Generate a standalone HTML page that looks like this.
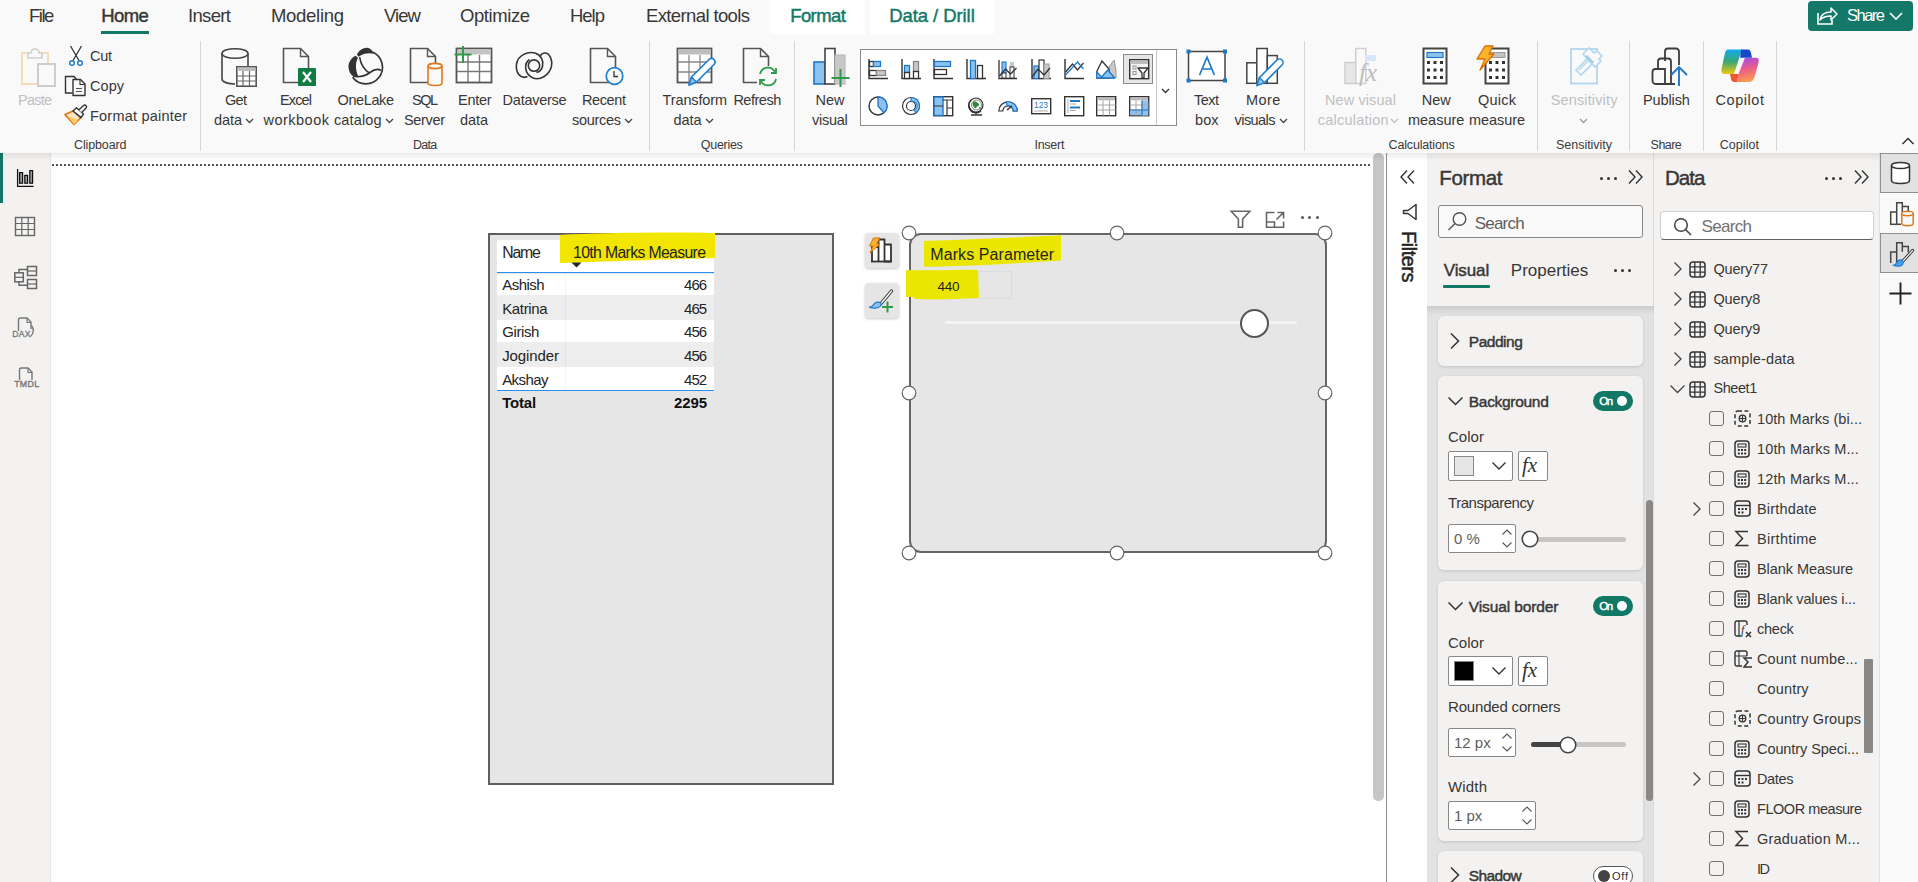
<!DOCTYPE html><html><head><meta charset="utf-8"><style>
html,body{margin:0;padding:0;}
body{width:1918px;height:882px;position:relative;overflow:hidden;background:#fff;font-family:"Liberation Sans",sans-serif;}
body>div,body>svg{position:absolute;}
.t{white-space:nowrap;}
svg{overflow:visible;}
</style></head><body>
<div style="left:0px;top:0px;width:1918px;height:153px;background:#f9f9f9"></div>
<div style="left:770px;top:0px;width:95px;height:34px;background:#ffffff"></div>
<div style="left:870px;top:0px;width:124px;height:34px;background:#ffffff"></div>
<div style="left:0px;top:153px;width:50px;height:729px;background:#f3f2f1"></div>
<div style="left:50px;top:153px;width:1px;height:729px;background:#e6e6e6"></div>
<div style="left:0px;top:153px;width:3px;height:50px;background:#117865"></div>
<div style="left:51px;top:153px;width:1335px;height:729px;background:#ffffff"></div>
<div style="left:52px;top:164px;width:1318px;height:0;border-top:2px dotted #555"></div>
<div style="left:1373px;top:153px;width:11px;height:648px;background:#c6c6c6;border-radius:5px"></div>
<div style="left:1386px;top:153px;width:1px;height:729px;background:#8c8c8c"></div>
<div style="left:1387px;top:153px;width:41px;height:729px;background:#ffffff"></div>
<div style="left:1387px;top:153px;width:41px;height:729px;background:#ffffff"></div>
<div style="left:1427px;top:153px;width:227px;height:729px;background:#f3f2f1"></div>
<div style="left:1427px;top:306px;width:227px;height:576px;background:#e2e2e2"></div>
<div style="left:1653px;top:153px;width:1px;height:729px;background:#dcdcdc"></div>
<div style="left:1654px;top:153px;width:225px;height:729px;background:#f3f2f1"></div>
<div style="left:1879px;top:153px;width:39px;height:729px;background:#f9f9f9"></div>
<div style="left:1879px;top:153px;width:1px;height:729px;background:#e1e1e1"></div>
<div style="left:0px;top:153px;width:1918px;height:8px;background:linear-gradient(rgba(0,0,0,0.075),rgba(0,0,0,0))"></div>
<div class="t" style="left:29.00px;top:7.34px;font-size:18.5px;line-height:18.5px;letter-spacing:-1.500px;color:#383736;font-weight:normal;">File</div>
<div class="t" style="left:101.22px;top:7.34px;font-size:18.5px;line-height:18.5px;letter-spacing:-0.599px;color:#383736;font-weight:normal;-webkit-text-stroke:0.45px #383736;">Home</div>
<div style="left:101px;top:31px;width:48px;height:3px;background:#117865"></div>
<div class="t" style="left:188.00px;top:7.34px;font-size:18.5px;line-height:18.5px;letter-spacing:-0.654px;color:#383736;font-weight:normal;">Insert</div>
<div class="t" style="left:271.00px;top:7.34px;font-size:18.5px;line-height:18.5px;letter-spacing:-0.296px;color:#383736;font-weight:normal;">Modeling</div>
<div class="t" style="left:384.00px;top:7.34px;font-size:18.5px;line-height:18.5px;letter-spacing:-0.937px;color:#383736;font-weight:normal;">View</div>
<div class="t" style="left:460.00px;top:7.34px;font-size:18.5px;line-height:18.5px;letter-spacing:-0.426px;color:#383736;font-weight:normal;">Optimize</div>
<div class="t" style="left:570.00px;top:7.34px;font-size:18.5px;line-height:18.5px;letter-spacing:-1.018px;color:#383736;font-weight:normal;">Help</div>
<div class="t" style="left:646.00px;top:7.34px;font-size:18.5px;line-height:18.5px;letter-spacing:-0.622px;color:#383736;font-weight:normal;">External tools</div>
<div class="t" style="left:790.22px;top:7.34px;font-size:18.5px;line-height:18.5px;letter-spacing:-0.606px;color:#117865;font-weight:normal;-webkit-text-stroke:0.45px #117865;">Format</div>
<div class="t" style="left:889.22px;top:7.34px;font-size:18.5px;line-height:18.5px;letter-spacing:-0.073px;color:#117865;font-weight:normal;-webkit-text-stroke:0.45px #117865;">Data / Drill</div>
<div style="left:1808px;top:1px;width:105px;height:30px;background:#137868;border-radius:4px"></div>
<div class="t" style="left:1847.00px;top:7.33px;font-size:16.5px;line-height:16.5px;letter-spacing:-1.500px;color:#ffffff;font-weight:normal;">Share</div>
<svg style="left:1816px;top:4px;" width="22" height="22" viewBox="0 0 22 22"><path d="M2 9v11h14v-4" fill="none" stroke="#fff" stroke-width="1.6"/><path d="M4 16c1-6 6-8 11-8V4l6 6-6 6v-4c-4 0-8 1-11 4z" fill="none" stroke="#fff" stroke-width="1.5" stroke-linejoin="round"/></svg>
<svg style="left:1888px;top:10px;" width="16" height="12" viewBox="0 0 16 12"><path d="M2 3l6 6 6-6" fill="none" stroke="#fff" stroke-width="1.6"/></svg>
<div class="t" style="left:18.00px;top:93.02px;font-size:14.5px;line-height:14.5px;letter-spacing:-0.769px;color:#c0c0c0;font-weight:normal;">Paste</div>
<div class="t" style="left:90.00px;top:49.22px;font-size:14.5px;line-height:14.5px;letter-spacing:-0.281px;color:#383736;font-weight:normal;">Cut</div>
<div class="t" style="left:90.00px;top:79.22px;font-size:14.5px;line-height:14.5px;letter-spacing:0.052px;color:#383736;font-weight:normal;">Copy</div>
<div class="t" style="left:90.00px;top:109.22px;font-size:14.5px;line-height:14.5px;letter-spacing:0.209px;color:#383736;font-weight:normal;">Format painter</div>
<div class="t" style="left:74.00px;top:138.92px;font-size:12.5px;line-height:12.5px;letter-spacing:-0.125px;color:#3b3a39;font-weight:normal;">Clipboard</div>
<div style="left:200px;top:41px;width:1px;height:110px;background:#d6d6d6"></div>
<div class="t" style="left:225.00px;top:93.02px;font-size:14.5px;line-height:14.5px;letter-spacing:-0.687px;color:#383736;font-weight:normal;">Get</div>
<div class="t" style="left:214.00px;top:112.82px;font-size:14.5px;line-height:14.5px;letter-spacing:-0.077px;color:#383736;font-weight:normal;">data</div>
<svg style="left:245px;top:118px;" width="9" height="6" viewBox="0 0 9 6"><path d="M1 1l3.5 3.5L8 1" fill="none" stroke="#444" stroke-width="1.3"/></svg>
<div class="t" style="left:280.00px;top:93.02px;font-size:14.5px;line-height:14.5px;letter-spacing:-0.863px;color:#383736;font-weight:normal;">Excel</div>
<div class="t" style="left:263.53px;top:112.82px;font-size:14.5px;line-height:14.5px;letter-spacing:0.483px;color:#383736;font-weight:normal;">workbook</div>
<div class="t" style="left:337.50px;top:93.02px;font-size:14.5px;line-height:14.5px;letter-spacing:-0.393px;color:#383736;font-weight:normal;">OneLake</div>
<div class="t" style="left:334.00px;top:112.82px;font-size:14.5px;line-height:14.5px;letter-spacing:0.123px;color:#383736;font-weight:normal;">catalog</div>
<svg style="left:385px;top:118px;" width="9" height="6" viewBox="0 0 9 6"><path d="M1 1l3.5 3.5L8 1" fill="none" stroke="#444" stroke-width="1.3"/></svg>
<div class="t" style="left:412.00px;top:93.02px;font-size:14.5px;line-height:14.5px;letter-spacing:-1.500px;color:#383736;font-weight:normal;">SQL</div>
<div class="t" style="left:404.00px;top:112.82px;font-size:14.5px;line-height:14.5px;letter-spacing:-0.341px;color:#383736;font-weight:normal;">Server</div>
<div class="t" style="left:458.00px;top:93.02px;font-size:14.5px;line-height:14.5px;letter-spacing:-0.289px;color:#383736;font-weight:normal;">Enter</div>
<div class="t" style="left:460.00px;top:112.82px;font-size:14.5px;line-height:14.5px;letter-spacing:-0.077px;color:#383736;font-weight:normal;">data</div>
<div class="t" style="left:502.60px;top:93.02px;font-size:14.5px;line-height:14.5px;letter-spacing:-0.249px;color:#383736;font-weight:normal;">Dataverse</div>
<div class="t" style="left:582.00px;top:93.02px;font-size:14.5px;line-height:14.5px;letter-spacing:-0.387px;color:#383736;font-weight:normal;">Recent</div>
<div class="t" style="left:572.00px;top:112.82px;font-size:14.5px;line-height:14.5px;letter-spacing:-0.294px;color:#383736;font-weight:normal;">sources</div>
<svg style="left:624px;top:118px;" width="9" height="6" viewBox="0 0 9 6"><path d="M1 1l3.5 3.5L8 1" fill="none" stroke="#444" stroke-width="1.3"/></svg>
<div class="t" style="left:413.00px;top:138.92px;font-size:12.5px;line-height:12.5px;letter-spacing:-0.704px;color:#3b3a39;font-weight:normal;">Data</div>
<div style="left:649px;top:41px;width:1px;height:110px;background:#d6d6d6"></div>
<div class="t" style="left:662.60px;top:93.02px;font-size:14.5px;line-height:14.5px;letter-spacing:-0.141px;color:#383736;font-weight:normal;">Transform</div>
<div class="t" style="left:673.40px;top:112.82px;font-size:14.5px;line-height:14.5px;letter-spacing:0.023px;color:#383736;font-weight:normal;">data</div>
<svg style="left:705px;top:118px;" width="9" height="6" viewBox="0 0 9 6"><path d="M1 1l3.5 3.5L8 1" fill="none" stroke="#444" stroke-width="1.3"/></svg>
<div class="t" style="left:733.40px;top:93.02px;font-size:14.5px;line-height:14.5px;letter-spacing:-0.494px;color:#383736;font-weight:normal;">Refresh</div>
<div class="t" style="left:700.80px;top:138.92px;font-size:12.5px;line-height:12.5px;letter-spacing:-0.294px;color:#3b3a39;font-weight:normal;">Queries</div>
<div style="left:794px;top:41px;width:1px;height:110px;background:#d6d6d6"></div>
<div class="t" style="left:815.50px;top:93.02px;font-size:14.5px;line-height:14.5px;letter-spacing:-0.022px;color:#383736;font-weight:normal;">New</div>
<div class="t" style="left:812.00px;top:112.82px;font-size:14.5px;line-height:14.5px;letter-spacing:-0.275px;color:#383736;font-weight:normal;">visual</div>
<div style="left:860px;top:49px;width:317px;height:77px;background:#ffffff;border:1px solid #8a8a8a;box-sizing:border-box"></div>
<div style="left:1156px;top:50px;width:1px;height:75px;background:#c8c8c8"></div>
<svg style="left:1161px;top:88px;" width="9" height="6" viewBox="0 0 9 6"><path d="M1 1l3.5 3.5L8 1" fill="none" stroke="#333" stroke-width="1.3"/></svg>
<div style="left:1123px;top:54px;width:30px;height:30px;background:#e6e6e6;border:1px solid #8a8a8a;box-sizing:border-box"></div>
<div class="t" style="left:1194.00px;top:93.02px;font-size:14.5px;line-height:14.5px;letter-spacing:-0.531px;color:#383736;font-weight:normal;">Text</div>
<div class="t" style="left:1195.00px;top:112.82px;font-size:14.5px;line-height:14.5px;letter-spacing:0.113px;color:#383736;font-weight:normal;">box</div>
<div class="t" style="left:1246.00px;top:93.02px;font-size:14.5px;line-height:14.5px;letter-spacing:0.456px;color:#383736;font-weight:normal;">More</div>
<div class="t" style="left:1234.60px;top:112.82px;font-size:14.5px;line-height:14.5px;letter-spacing:-0.588px;color:#383736;font-weight:normal;">visuals</div>
<svg style="left:1279px;top:118px;" width="9" height="6" viewBox="0 0 9 6"><path d="M1 1l3.5 3.5L8 1" fill="none" stroke="#444" stroke-width="1.3"/></svg>
<div class="t" style="left:1034.40px;top:138.92px;font-size:12.5px;line-height:12.5px;letter-spacing:-0.233px;color:#3b3a39;font-weight:normal;">Insert</div>
<div style="left:1304px;top:41px;width:1px;height:110px;background:#d6d6d6"></div>
<div class="t" style="left:1325.00px;top:93.02px;font-size:14.5px;line-height:14.5px;letter-spacing:0.099px;color:#c0c0c0;font-weight:normal;">New visual</div>
<div class="t" style="left:1317.70px;top:112.82px;font-size:14.5px;line-height:14.5px;letter-spacing:0.239px;color:#c0c0c0;font-weight:normal;">calculation</div>
<svg style="left:1390px;top:118px;" width="9" height="6" viewBox="0 0 9 6"><path d="M1 1l3.5 3.5L8 1" fill="none" stroke="#c0c0c0" stroke-width="1.3"/></svg>
<div class="t" style="left:1421.80px;top:93.02px;font-size:14.5px;line-height:14.5px;letter-spacing:-0.022px;color:#383736;font-weight:normal;">New</div>
<div class="t" style="left:1408.00px;top:112.82px;font-size:14.5px;line-height:14.5px;letter-spacing:-0.020px;color:#383736;font-weight:normal;">measure</div>
<div class="t" style="left:1478.00px;top:93.02px;font-size:14.5px;line-height:14.5px;letter-spacing:0.227px;color:#383736;font-weight:normal;">Quick</div>
<div class="t" style="left:1469.00px;top:112.82px;font-size:14.5px;line-height:14.5px;letter-spacing:-0.070px;color:#383736;font-weight:normal;">measure</div>
<div class="t" style="left:1388.60px;top:138.92px;font-size:12.5px;line-height:12.5px;letter-spacing:-0.181px;color:#3b3a39;font-weight:normal;">Calculations</div>
<div style="left:1537px;top:41px;width:1px;height:110px;background:#d6d6d6"></div>
<div class="t" style="left:1550.70px;top:93.02px;font-size:14.5px;line-height:14.5px;letter-spacing:0.144px;color:#c0c0c0;font-weight:normal;">Sensitivity</div>
<svg style="left:1579px;top:118px;" width="9" height="6" viewBox="0 0 9 6"><path d="M1 1l3.5 3.5L8 1" fill="none" stroke="#999" stroke-width="1.3"/></svg>
<div class="t" style="left:1556.00px;top:138.92px;font-size:12.5px;line-height:12.5px;letter-spacing:-0.026px;color:#3b3a39;font-weight:normal;">Sensitivity</div>
<div style="left:1629px;top:41px;width:1px;height:110px;background:#d6d6d6"></div>
<div class="t" style="left:1643.00px;top:93.02px;font-size:14.5px;line-height:14.5px;letter-spacing:-0.110px;color:#383736;font-weight:normal;">Publish</div>
<div class="t" style="left:1650.60px;top:138.92px;font-size:12.5px;line-height:12.5px;letter-spacing:-0.537px;color:#3b3a39;font-weight:normal;">Share</div>
<div style="left:1703px;top:41px;width:1px;height:110px;background:#d6d6d6"></div>
<div class="t" style="left:1715.60px;top:93.02px;font-size:14.5px;line-height:14.5px;letter-spacing:0.544px;color:#383736;font-weight:normal;">Copilot</div>
<div class="t" style="left:1719.80px;top:138.92px;font-size:12.5px;line-height:12.5px;letter-spacing:0.048px;color:#3b3a39;font-weight:normal;">Copilot</div>
<div style="left:1776px;top:41px;width:1px;height:110px;background:#d6d6d6"></div>
<svg style="left:1901px;top:136px;" width="14" height="10" viewBox="0 0 14 10"><path d="M1.5 8l5.5-5.5L12.5 8" fill="none" stroke="#333" stroke-width="1.5"/></svg>
<svg style="left:20px;top:47px;" width="37" height="41" viewBox="0 0 37 41"><rect x="2" y="6" width="26" height="31" fill="none" stroke="#f4dcb8" stroke-width="2"/>
<path d="M8 11V6h3a4 4 0 0 1 8 0h3v5z" fill="#f9f9f9" stroke="#cfcfcf" stroke-width="1.6"/>
<rect x="18" y="17" width="17" height="22" fill="#f9f9f9" stroke="#cdcdcd" stroke-width="2"/></svg>
<svg style="left:68px;top:45px;" width="16" height="22" viewBox="0 0 16 22"><path d="M2.5 1L11 15.5M13.5 1L5 15.5" stroke="#333" stroke-width="1.3" fill="none"/>
<circle cx="4" cy="18" r="2.3" fill="none" stroke="#1f77c9" stroke-width="1.4"/><circle cx="12" cy="18" r="2.3" fill="none" stroke="#1f77c9" stroke-width="1.4"/></svg>
<svg style="left:64px;top:75px;" width="22" height="22" viewBox="0 0 22 22"><path d="M8.5 18H1.5V1.5h8.5l2.5 3" fill="none" stroke="#333" stroke-width="1.4" stroke-linejoin="round"/>
<path d="M9 4.5h7.5l4.5 4.5v11.5H9z" fill="#f9f9f9" stroke="#333" stroke-width="1.4" stroke-linejoin="round"/>
<path d="M16 4.5v5h5" fill="none" stroke="#333" stroke-width="1.1"/><path d="M12 13.5h6M12 16.5h6" stroke="#555" stroke-width="1.1"/></svg>
<svg style="left:64px;top:104px;" width="24" height="24" viewBox="0 0 24 24"><path d="M1 10.6L9 7L17 13.6L10 20.4Z" fill="#fde6c4" stroke="#e07a10" stroke-width="1.6" stroke-linejoin="round"/>
<path d="M4 12.5C8 13 12 15 14 17L10 20.4Z" fill="#f7c96a"/>
<path d="M9 7L12.5 3.8L19.5 10L17 13.6Z" fill="#fff" stroke="#333" stroke-width="1.4" stroke-linejoin="round"/>
<path d="M14.8 6L19.5 1.6a1.7 1.7 0 0 1 2.6 2.3L17.6 8.5" fill="#fff" stroke="#333" stroke-width="1.4" stroke-linejoin="round"/></svg>
<svg style="left:220px;top:47px;" width="38" height="41" viewBox="0 0 38 41"><path d="M2 6v26c0 3 6 5 13 5" fill="none" stroke="#444" stroke-width="1.6"/>
<ellipse cx="15" cy="6.5" rx="13" ry="4.8" fill="none" stroke="#444" stroke-width="1.6"/>
<path d="M28 6.5V19" stroke="#444" stroke-width="1.6"/>
<rect x="16.8" y="19.8" width="19.4" height="19.4" fill="#fff" stroke="#555" stroke-width="1.6"/>
<rect x="17.5" y="20.5" width="18" height="3.5" fill="#bdbdbd"/>
<path d="M17 29h19M17 34h19M23 24v15M29.5 24v15" stroke="#666" stroke-width="1.2"/></svg>
<svg style="left:282px;top:47px;" width="36" height="41" viewBox="0 0 36 41"><path d="M1.5 1.5h17l8 8v26h-25z" fill="#f9f9f9" stroke="#555" stroke-width="1.6" stroke-linejoin="round"/>
<path d="M18.5 1.5v8h8" fill="none" stroke="#555" stroke-width="1.4"/>
<rect x="16" y="21" width="18" height="18" rx="1" fill="#107c41"/>
<path d="M21 25l8 10M29 25l-8 10" stroke="#fff" stroke-width="2.2"/></svg>
<svg style="left:340px;top:42px;" width="50" height="48" viewBox="0 0 50 48"><path d="M32.5 10A16.6 16.6 0 1 1 12.6 35.2" fill="none" stroke="#333" stroke-width="1.7"/>
<path d="M15.5 13.8C10.5 16.5 8.2 21 8.5 25.5C8.8 30 11 33 13.5 34.5L18.2 34C15.3 28 15.2 20.5 18 15.8Z" fill="#333"/>
<path d="M16.8 12.5C19.5 8 23 5.6 27 5.8C30 6 32.5 8.5 33.8 11.8C29 10.6 23 11.2 18.6 14.8Z" fill="#333"/>
<path d="M19.6 15.2C21 23.5 25 28.5 29.5 31" fill="none" stroke="#333" stroke-width="1.6"/>
<path d="M13 34.3C20 35.5 25.5 34 30 30.5C34 27.5 38 26.5 41 28.5" fill="none" stroke="#333" stroke-width="1.6"/></svg>
<svg style="left:409px;top:47px;" width="36" height="41" viewBox="0 0 36 41"><path d="M1.5 1.5h17l8 8v26h-25z" fill="#f9f9f9" stroke="#555" stroke-width="1.6" stroke-linejoin="round"/>
<path d="M18.5 1.5v8h8" fill="none" stroke="#555" stroke-width="1.4"/>
<path d="M19 19v17c0 1.5 3 2.5 7 2.5s7-1 7-2.5V19" fill="#f9f9f9" stroke="#e07a1f" stroke-width="1.6"/>
<ellipse cx="26" cy="19" rx="7" ry="2.6" fill="#f9f9f9" stroke="#e07a1f" stroke-width="1.6"/></svg>
<svg style="left:453px;top:45px;" width="41" height="41" viewBox="0 0 41 41"><rect x="3.5" y="3.5" width="35" height="34" fill="#fff" stroke="#555" stroke-width="1.8"/>
<rect x="4.5" y="4.5" width="33" height="5" fill="#c4c4c4"/>
<path d="M4 17h34M4 26.5h34M15 10v27M26.5 10v27" stroke="#777" stroke-width="1.4"/>
<path d="M10 1v17M1.5 9.5h17" stroke="#2f9a4a" stroke-width="2"/></svg>
<svg style="left:508px;top:42px;" width="52" height="48" viewBox="0 0 52 48"><path d="M19.5 34.5C12 38 7.5 30 8.5 22C10 13 20 9 27 11C33 13 36 19 34.5 24.5C33.5 28 31 30 28.5 30.5" fill="none" stroke="#333" stroke-width="1.6"/>
<circle cx="26" cy="23.6" r="5.7" fill="none" stroke="#333" stroke-width="1.6"/>
<path d="M21.5 17.5C16 21 16 31 24 35.5C32 39.5 41 33 43.3 25C45 17 41 10.5 36.5 11C34.5 11.3 33 12.5 32 14" fill="none" stroke="#333" stroke-width="1.6"/></svg>
<svg style="left:589px;top:47px;" width="36" height="41" viewBox="0 0 36 41"><path d="M1.5 1.5h17l8 8v26h-25z" fill="#f9f9f9" stroke="#555" stroke-width="1.6" stroke-linejoin="round"/>
<path d="M18.5 1.5v8h8" fill="none" stroke="#555" stroke-width="1.4"/>
<circle cx="25.5" cy="29" r="8.3" fill="#f9f9f9" stroke="#1f7fd0" stroke-width="1.7"/>
<path d="M25 24v5.5h4" fill="none" stroke="#333" stroke-width="1.3"/></svg>
<svg style="left:676px;top:47px;" width="41" height="41" viewBox="0 0 41 41"><rect x="1.5" y="1.5" width="34" height="34" fill="#fff" stroke="#555" stroke-width="1.8"/>
<rect x="2.5" y="2.5" width="32" height="5" fill="#bdbdbd"/>
<path d="M2 15h33M2 25h33M13 8v27M24 8v27" stroke="#888" stroke-width="1.3"/>
<path d="M13 38l2.5-8L33 12.5a2.5 2.5 0 0 1 5 5L20.5 35z" fill="#fff" stroke="#1f7fd0" stroke-width="1.7" stroke-linejoin="round"/>
<path d="M13 38l2.5-8 5 5z" fill="#8ec2ee" stroke="#1f7fd0" stroke-width="1.4" stroke-linejoin="round"/></svg>
<svg style="left:742px;top:47px;" width="38" height="41" viewBox="0 0 38 41"><path d="M1.5 1.5h17l8 8v26h-25z" fill="#f9f9f9" stroke="#555" stroke-width="1.6" stroke-linejoin="round"/>
<path d="M18.5 1.5v8h8" fill="none" stroke="#555" stroke-width="1.4"/>
<rect x="15" y="19" width="22" height="21" fill="#f9f9f9"/>
<path d="M18 27a8 8 0 0 1 15-2M34 32a8 8 0 0 1-15 2" fill="none" stroke="#2f9a4a" stroke-width="1.8"/>
<path d="M34 21v5h-5M18 38v-5h5" fill="none" stroke="#2f9a4a" stroke-width="1.8"/></svg>
<svg style="left:812px;top:47px;" width="38" height="41" viewBox="0 0 38 41"><rect x="2" y="15" width="11" height="22" fill="#8ec2ee" stroke="#1f77c9" stroke-width="1.6"/>
<rect x="13" y="1.5" width="10" height="35.5" fill="#fff" stroke="#444" stroke-width="1.6"/>
<rect x="23" y="8" width="10" height="29" fill="#c8c8c8" stroke="#bbb" stroke-width="1.2"/>
<path d="M28.5 22v18M19.5 31h18" stroke="#2f9a4a" stroke-width="2"/></svg>
<svg style="left:868px;top:59px;" width="20" height="20" viewBox="0 0 20 20"><path d="M1 0v19.5h19" fill="none" stroke="#333" stroke-width="1.4"/><rect x="1.5" y="2.5" width="4" height="5" fill="#fff" stroke="#333" stroke-width="1.3"/><rect x="5.5" y="2.5" width="7" height="5" fill="#8ec2ee" stroke="#1f77c9" stroke-width="1.3"/><rect x="1.5" y="11.5" width="7" height="5" fill="#fff" stroke="#333" stroke-width="1.3"/><rect x="8.5" y="11.5" width="9" height="5" fill="#c8c8c8" stroke="#888" stroke-width="1.3"/></svg>
<svg style="left:901px;top:59px;" width="20" height="20" viewBox="0 0 20 20"><path d="M1 0v19.5h19" fill="none" stroke="#333" stroke-width="1.4"/><rect x="3.5" y="6.5" width="5" height="7" fill="#8ec2ee" stroke="#1f77c9" stroke-width="1.3"/><rect x="3.5" y="13.5" width="5" height="6" fill="#fff" stroke="#333" stroke-width="1.3"/><rect x="12.5" y="2.5" width="5" height="10" fill="#c8c8c8" stroke="#888" stroke-width="1.3"/><rect x="12.5" y="12.5" width="5" height="7" fill="#fff" stroke="#333" stroke-width="1.3"/></svg>
<svg style="left:933px;top:59px;" width="20" height="20" viewBox="0 0 20 20"><path d="M1 0v19.5h19" fill="none" stroke="#333" stroke-width="1.4"/><rect x="1.5" y="2.5" width="16" height="5" fill="#8ec2ee" stroke="#1f77c9" stroke-width="1.3"/><rect x="1.5" y="10.5" width="12" height="5" fill="#fff" stroke="#333" stroke-width="1.3"/></svg>
<svg style="left:966px;top:59px;" width="20" height="20" viewBox="0 0 20 20"><path d="M1 0v19.5h19" fill="none" stroke="#333" stroke-width="1.4"/><rect x="4.5" y="1.5" width="5" height="18" fill="#8ec2ee" stroke="#1f77c9" stroke-width="1.3"/><rect x="11.5" y="6.5" width="5" height="13" fill="#fff" stroke="#333" stroke-width="1.3"/></svg>
<svg style="left:998px;top:59px;" width="20" height="20" viewBox="0 0 20 20"><path d="M1 1v18.5h18" fill="none" stroke="#333" stroke-width="1.3"/><rect x="4" y="3" width="4" height="11" fill="#8ec2ee" stroke="#1f77c9" stroke-width="1.1"/><rect x="4" y="14" width="4" height="5" fill="#fff" stroke="#333" stroke-width="1"/><rect x="12" y="3" width="4" height="5" fill="#c8c8c8"/><rect x="12" y="8" width="4" height="11" fill="#fff" stroke="#333" stroke-width="1"/><path d="M1.5 17l6-7 5 5 6-6" fill="none" stroke="#333" stroke-width="1.3"/></svg>
<svg style="left:1031px;top:59px;" width="20" height="20" viewBox="0 0 20 20"><path d="M1 0v19.5h19" fill="none" stroke="#333" stroke-width="1.4"/><rect x="3" y="7" width="5" height="12.5" fill="#8ec2ee" stroke="#1f77c9" stroke-width="1.2"/><rect x="8" y="1" width="5" height="18.5" fill="#fff" stroke="#333" stroke-width="1.2"/><rect x="13" y="5" width="5" height="14.5" fill="#c8c8c8" stroke="#999" stroke-width="1"/><path d="M1 18l6-8 6 6 6-7" fill="none" stroke="#333" stroke-width="1.3"/></svg>
<svg style="left:1064px;top:59px;" width="20" height="20" viewBox="0 0 20 20"><path d="M1 0v19.5h19" fill="none" stroke="#333" stroke-width="1.4"/><path d="M1.5 13l7-8 5 6 6-7" fill="none" stroke="#333" stroke-width="1.3"/><path d="M1.5 16l12-13 6 7" fill="none" stroke="#1f77c9" stroke-width="1.3"/></svg>
<svg style="left:1096px;top:59px;" width="20" height="20" viewBox="0 0 20 20"><path d="M13 19V8l5-7 2 10v8z" fill="#c8c8c8" stroke="#999" stroke-width="1"/><path d="M1 12l5-10 7 8v9H1z" fill="#fff" stroke="#333" stroke-width="1.3"/><path d="M0.7 13l5 5 6-7 7 8H0.7z" fill="#8ec2ee" stroke="#1f77c9" stroke-width="1.3" stroke-linejoin="round"/></svg>
<svg style="left:1129px;top:59px;" width="20" height="20" viewBox="0 0 20 20"><rect x="0.7" y="0.7" width="19" height="19" fill="#f3f3f3" stroke="#333" stroke-width="1.4"/><rect x="1.4" y="1.4" width="17.6" height="3.5" fill="#bbb"/><rect x="4" y="7" width="3" height="3" fill="none" stroke="#999"/><rect x="4" y="12.5" width="3" height="3" fill="none" stroke="#999"/><path d="M9 9h10l-4 5v5h-2v-5z" fill="#fff" stroke="#333" stroke-width="1.3" stroke-linejoin="round"/></svg>
<svg style="left:868px;top:96px;" width="20" height="20" viewBox="0 0 20 20"><circle cx="10" cy="10" r="9" fill="#fff" stroke="#333" stroke-width="1.4"/><path d="M10 1a9 9 0 0 1 6 15.7L10 10z" fill="#8ec2ee" stroke="#1f77c9" stroke-width="1.3" stroke-linejoin="round"/></svg>
<svg style="left:901px;top:96px;" width="20" height="20" viewBox="0 0 20 20"><circle cx="10" cy="10" r="8.5" fill="none" stroke="#333" stroke-width="1.2"/><circle cx="10" cy="10" r="4.5" fill="none" stroke="#333" stroke-width="1.2"/><path d="M10 1.5a8.5 8.5 0 0 1 5 15.3L13 14a4.5 4.5 0 0 0-3-8.5z" fill="#8ec2ee" stroke="#1f77c9" stroke-width="1.1"/></svg>
<svg style="left:933px;top:96px;" width="20" height="20" viewBox="0 0 20 20"><rect x="0.7" y="0.7" width="19" height="19" fill="#fff" stroke="#333" stroke-width="1.4"/><rect x="1" y="1" width="9" height="18.5" fill="#8ec2ee" stroke="#1f77c9" stroke-width="1.4"/><path d="M1 10h9M10 4h9.5M14 4v15.5M14 12h5.5" stroke="#333" stroke-width="1.2" fill="none"/></svg>
<svg style="left:966px;top:96px;" width="20" height="20" viewBox="0 0 20 20"><circle cx="10" cy="9" r="7" fill="none" stroke="#333" stroke-width="1.2"/><circle cx="10.5" cy="9" r="5" fill="#fff" stroke="#666" stroke-width="0.8"/><path d="M7 6c2-1 4 0 5 1s2 2 0 3-2 3-3 2-3-2-2-6zM13 11l2 1-1 2z" fill="#2b8a3e"/><path d="M5 4a7 7 0 0 0 10 11" fill="none" stroke="#333" stroke-width="1.4"/><path d="M10 16v2M5 19h11" stroke="#333" stroke-width="1.4"/></svg>
<svg style="left:998px;top:96px;" width="20" height="20" viewBox="0 0 20 20"><path d="M1 15a9 9 0 0 1 18 0" fill="none" stroke="#fff" stroke-width="0"/><path d="M0.8 15a9.2 9.2 0 0 1 18.4 0h-4a5.2 5.2 0 0 0-10.4 0z" fill="#fff" stroke="#333" stroke-width="1.2"/><path d="M8 6a9.2 9.2 0 0 1 11.2 9h-4a5.2 5.2 0 0 0-6-5.3z" fill="#8ec2ee" stroke="#1f77c9" stroke-width="1.2"/><path d="M9 14l5-4" stroke="#333" stroke-width="1.6"/></svg>
<svg style="left:1031px;top:96px;" width="20" height="20" viewBox="0 0 20 20"><rect x="0.7" y="2.7" width="19" height="15" fill="#fff" stroke="#333" stroke-width="1.4"/><text x="10" y="11.5" font-size="8.5" text-anchor="middle" fill="#1f77c9" font-family="Liberation Sans">123</text><path d="M3 15h14" stroke="#999" stroke-width="0.8"/></svg>
<svg style="left:1064px;top:96px;" width="20" height="20" viewBox="0 0 20 20"><rect x="0.7" y="0.7" width="19" height="19" fill="#fff" stroke="#333" stroke-width="1.4"/><path d="M4 3v14" stroke="#999" stroke-width="0.8"/><rect x="6" y="4" width="10" height="2" fill="#1f77c9"/><rect x="6" y="7.5" width="6" height="1" fill="#aaa"/><rect x="6" y="10.5" width="10" height="2" fill="#1f77c9"/><rect x="6" y="14" width="6" height="1" fill="#aaa"/></svg>
<svg style="left:1096px;top:96px;" width="20" height="20" viewBox="0 0 20 20"><rect x="0.7" y="0.7" width="19" height="19" fill="#fff" stroke="#333" stroke-width="1.4"/><rect x="1.4" y="1.4" width="17.6" height="3" fill="#bbb"/><path d="M1 9h18.5M1 14h18.5M7 4.5v15M13.5 4.5v15" stroke="#aaa" stroke-width="1.1"/></svg>
<svg style="left:1129px;top:96px;" width="20" height="20" viewBox="0 0 20 20"><rect x="0.7" y="0.7" width="19" height="19" fill="#fff" stroke="#333" stroke-width="1.4"/><rect x="1.4" y="1.4" width="17.6" height="3" fill="#bbb"/><rect x="13" y="4.5" width="6.3" height="15" fill="#8ec2ee"/><rect x="1.4" y="14" width="17.6" height="5.3" fill="#8ec2ee"/><path d="M1 9h18.5M1 14h18.5M7 4.5v15M13 4.5v15" stroke="#aaa" stroke-width="1.1"/><path d="M1 14h18.5M13 4.5v15" stroke="#1f77c9" stroke-width="1.1"/></svg>
<svg style="left:1186px;top:49px;" width="42" height="34" viewBox="0 0 42 34"><rect x="2.5" y="2.5" width="36.5" height="29" fill="#fff" stroke="#444" stroke-width="1.5"/>
<rect x="0.5" y="0.5" width="4" height="4" fill="#1f77c9"/><rect x="37" y="0.5" width="4" height="4" fill="#1f77c9"/><rect x="0.5" y="29.5" width="4" height="4" fill="#1f77c9"/><rect x="37" y="29.5" width="4" height="4" fill="#1f77c9"/>
<path d="M13.6 26L21 8.2L28.4 26M16.2 20h9.6" fill="none" stroke="#1f77c9" stroke-width="1.7"/></svg>
<svg style="left:1245px;top:47px;" width="40" height="40" viewBox="0 0 40 40"><rect x="1.8" y="15.8" width="10" height="20.5" fill="#fff" stroke="#444" stroke-width="1.5"/>
<rect x="11.8" y="1.5" width="10.5" height="34.8" fill="#fff" stroke="#444" stroke-width="1.5"/>
<rect x="22.3" y="8.6" width="10" height="27.7" fill="#fff" stroke="#444" stroke-width="1.5"/>
<path d="M12 38.5l2.5-8L32 13a2.5 2.5 0 0 1 5 5L19.5 35.5z" fill="#fff" stroke="#1f7fd0" stroke-width="1.6" stroke-linejoin="round"/>
<path d="M12 38.5l2.5-8 5 5z" fill="#8ec2ee" stroke="#1f7fd0" stroke-width="1.3"/></svg>
<svg style="left:1342px;top:47px;" width="40" height="40" viewBox="0 0 40 40"><rect x="3" y="15.5" width="10.8" height="21" fill="#e6e6e6" stroke="#cfcfcf" stroke-width="1.5"/>
<rect x="13.8" y="1.5" width="10" height="35" fill="#f9f9f9" stroke="#cfcfcf" stroke-width="1.5"/>
<rect x="23" y="8" width="11" height="6" fill="#d6e8f7"/>
<text x="17" y="34" font-family="Liberation Serif" font-style="italic" font-size="25" fill="#bdbdbd">fx</text></svg>
<svg style="left:1422px;top:47px;" width="27" height="38" viewBox="0 0 27 38"><rect x="1.5" y="1.5" width="23" height="35" fill="#fff" stroke="#444" stroke-width="2"/>
<rect x="5" y="5.5" width="16" height="5" fill="#8ec2ee" stroke="#1f77c9" stroke-width="1.2"/>
<g fill="#333"><rect x="5" y="14" width="3" height="3"/><rect x="11.5" y="14" width="3" height="3"/><rect x="18" y="14" width="3" height="3"/>
<rect x="5" y="21.5" width="3" height="3"/><rect x="11.5" y="21.5" width="3" height="3"/><rect x="18" y="21.5" width="3" height="3"/>
<rect x="5" y="29" width="3" height="3"/><rect x="11.5" y="29" width="3" height="3"/><rect x="18" y="29" width="3" height="3"/></g></svg>
<svg style="left:1476px;top:45px;" width="34" height="41" viewBox="0 0 34 41"><rect x="9.5" y="3.5" width="23" height="35" fill="#fff" stroke="#444" stroke-width="2"/>
<rect x="13" y="7.5" width="16" height="5" fill="#c4c4c4" stroke="#999" stroke-width="1"/>
<g fill="#333"><rect x="13" y="16" width="3" height="3"/><rect x="19.5" y="16" width="3" height="3"/><rect x="26" y="16" width="3" height="3"/>
<rect x="13" y="23.5" width="3" height="3"/><rect x="19.5" y="23.5" width="3" height="3"/><rect x="26" y="23.5" width="3" height="3"/>
<rect x="13" y="31" width="3" height="3"/><rect x="19.5" y="31" width="3" height="3"/><rect x="26" y="31" width="3" height="3"/></g>
<path d="M9 1h8l-4 8h5L4 25l5-11H1z" fill="#f7b32b" stroke="#e06c00" stroke-width="1.3" stroke-linejoin="round"/></svg>
<svg style="left:1569px;top:46px;" width="38" height="40" viewBox="0 0 38 40"><rect x="2" y="3" width="26" height="34.5" fill="none" stroke="#b1d6ee" stroke-width="1.8"/>
<path d="M7 24l13-13 5 5-13 13z" fill="#f9f9f9" stroke="#b1d6ee" stroke-width="1.6"/>
<path d="M10 24l10-10" stroke="#b1d6ee" stroke-width="1.3"/>
<path d="M14 8l6-6 5 5 3-2 5 5-3 3 2 2-6 6z" fill="#f9f9f9" stroke="#b1d6ee" stroke-width="1.6"/>
<path d="M17 10l7 7" stroke="#a6cfea" stroke-width="3"/></svg>
<svg style="left:1651px;top:47px;" width="37" height="40" viewBox="0 0 37 40"><path d="M14 14V4.5a3 3 0 0 1 3-3h8a3 3 0 0 1 3 3V18" fill="none" stroke="#3c3c3c" stroke-width="1.8"/>
<path d="M7 22v-7.5a3 3 0 0 1 3-3h7a3 3 0 0 1 3 3V37" fill="none" stroke="#3c3c3c" stroke-width="1.8"/>
<path d="M24 37H4.5a3 3 0 0 1-3-3v-9a3 3 0 0 1 3-3H14V37" fill="none" stroke="#3c3c3c" stroke-width="1.8"/>
<path d="M28 39V20M20 28l8-8 8 8" fill="none" stroke="#1f77c9" stroke-width="1.9"/></svg>
<svg style="left:1720px;top:48px;" width="40" height="36" viewBox="0 0 40 36"><defs>
<linearGradient id="cpA" x1="0" y1="0" x2="0" y2="1"><stop offset="0" stop-color="#13a8f0"/><stop offset="0.5" stop-color="#3aa774"/><stop offset="1" stop-color="#f3c80c"/></linearGradient>
<linearGradient id="cpB" x1="0.3" y1="0" x2="0.5" y2="1"><stop offset="0" stop-color="#a04ee8"/><stop offset="0.45" stop-color="#ec5a8a"/><stop offset="1" stop-color="#fba04e"/></linearGradient>
</defs>
<path d="M8 1.6H22L14 26H5Q1 26 1.3 22L4.5 7Q5.5 1.6 8 1.6Z" fill="url(#cpA)"/>
<path d="M21 1.6H28Q30 1.6 31 5L32 9.8H24.5L20.2 9.8Z" fill="#1646cc"/>
<path d="M25 9.8H36Q39.5 9.8 38.7 14L34.5 29Q33 34 29 34H17L18.5 26Z" fill="url(#cpB)"/>
<path d="M10 26H18.5L17 34H14Q11.5 34 10.8 30Z" fill="#f0562f"/></svg>
<svg style="left:15px;top:167px;" width="20" height="22" viewBox="0 0 20 22"><path d="M2.6 2v17.4h16" fill="none" stroke="#111" stroke-width="1.3"/>
<rect x="4.6" y="5.6" width="3" height="10.6" fill="#999" stroke="#111" stroke-width="1.2"/>
<rect x="9.8" y="8.4" width="2.8" height="7.8" fill="#999" stroke="#111" stroke-width="1.2"/>
<rect x="14.8" y="3.6" width="2.8" height="12.6" fill="#999" stroke="#111" stroke-width="1.2"/></svg>
<svg style="left:14px;top:216px;" width="22" height="21" viewBox="0 0 22 21"><rect x="1.5" y="1.5" width="19" height="18" fill="none" stroke="#666" stroke-width="1.4"/>
<path d="M1.5 7.5h19M1.5 13.5h19M7.8 1.5v18M14.2 1.5v18" stroke="#666" stroke-width="1.2"/></svg>
<svg style="left:13px;top:265px;" width="25" height="25" viewBox="0 0 25 25"><rect x="1.8" y="7.8" width="8.5" height="9" fill="none" stroke="#666" stroke-width="1.5"/><path d="M2 12.3h8" stroke="#666" stroke-width="1.2"/>
<rect x="14.5" y="1.5" width="9" height="9" fill="none" stroke="#666" stroke-width="1.5"/><path d="M14.5 6h9" stroke="#666" stroke-width="1.2"/>
<rect x="14.5" y="14.5" width="9" height="9" fill="none" stroke="#666" stroke-width="1.5"/><path d="M14.5 19h9" stroke="#666" stroke-width="1.2"/>
<path d="M6 7.8V4.5h8.5M6 16.8v3.5h8.5" fill="none" stroke="#666" stroke-width="1.4"/></svg>
<svg style="left:11px;top:316px;" width="26" height="23" viewBox="0 0 26 23"><path d="M7.5 15V4a2 2 0 0 1 2-2h6.5l4 4V13" fill="none" stroke="#777" stroke-width="1.4"/><path d="M16 2v4.5h4" fill="none" stroke="#777" stroke-width="1.2"/>
<text x="1.3" y="21.3" font-size="8.6" fill="#777" font-family="Liberation Sans" stroke="#777" stroke-width="0.3" letter-spacing="0.2">DAX</text>
<path d="M20.5 9.5c2.5 3 2.5 8 -1 11" fill="none" stroke="#777" stroke-width="1.3"/></svg>
<svg style="left:12px;top:366px;" width="26" height="23" viewBox="0 0 26 23"><path d="M7.5 14V4a2 2 0 0 1 2-2h6.5l4 4V14" fill="none" stroke="#777" stroke-width="1.4"/><path d="M16 2v4.5h4" fill="none" stroke="#777" stroke-width="1.2"/>
<text x="2.2" y="21" font-size="8.8" fill="#777" font-family="Liberation Sans" stroke="#777" stroke-width="0.35" letter-spacing="0.3">TMDL</text></svg>
<div style="left:488px;top:233px;width:346px;height:552px;background:#e6e6e6;border:2px solid #5f5f5f;box-sizing:border-box"></div>
<div style="left:497px;top:240px;width:217px;height:33px;background:#ffffff"></div>
<svg style="left:558px;top:231px" width="160" height="34" viewBox="0 0 160 34"><path d="M2 4 C40 2 100 1 157 2 L157 27 C120 28 60 30 2 32 Z" fill="#f2e600"/></svg>
<div style="left:497px;top:272px;width:217px;height:1.3px;background:#2a8ff0"></div>
<div style="left:497px;top:274px;width:217px;height:21px;background:#ffffff"></div>
<div style="left:497px;top:295px;width:217px;height:25px;background:#ededed"></div>
<div style="left:497px;top:320px;width:217px;height:22px;background:#ffffff"></div>
<div style="left:497px;top:342px;width:217px;height:25px;background:#ededed"></div>
<div style="left:497px;top:367px;width:217px;height:23px;background:#ffffff"></div>
<div style="left:497px;top:390px;width:217px;height:1.3px;background:#2a8ff0"></div>
<div style="left:565px;top:274px;width:1px;height:116px;background:rgba(0,0,0,0.04)"></div>
<div class="t" style="left:502.20px;top:244.82px;font-size:15.8px;line-height:15.8px;letter-spacing:-1.185px;color:#252423;font-weight:normal;">Name</div>
<div class="t" style="left:573.00px;top:244.82px;font-size:15.8px;line-height:15.8px;letter-spacing:-0.648px;color:#252423;font-weight:normal;">10th Marks Measure</div>
<svg style="left:571px;top:262px;" width="12" height="6" viewBox="0 0 12 6"><path d="M0.5 0.5h10l-5 5z" fill="#252423"/></svg>
<div class="t" style="left:502.20px;top:277.10px;font-size:15px;line-height:15px;letter-spacing:-0.523px;color:#252423;font-weight:normal;">Ashish</div>
<div class="t" style="left:684.00px;top:277.10px;font-size:15px;line-height:15px;letter-spacing:-0.910px;color:#252423;font-weight:normal;">466</div>
<div class="t" style="left:502.20px;top:300.70px;font-size:15px;line-height:15px;letter-spacing:-0.356px;color:#252423;font-weight:normal;">Katrina</div>
<div class="t" style="left:684.00px;top:300.70px;font-size:15px;line-height:15px;letter-spacing:-0.910px;color:#252423;font-weight:normal;">465</div>
<div class="t" style="left:502.20px;top:324.10px;font-size:15px;line-height:15px;letter-spacing:-0.393px;color:#252423;font-weight:normal;">Girish</div>
<div class="t" style="left:684.00px;top:324.10px;font-size:15px;line-height:15px;letter-spacing:-0.910px;color:#252423;font-weight:normal;">456</div>
<div class="t" style="left:502.20px;top:347.90px;font-size:15px;line-height:15px;letter-spacing:-0.120px;color:#252423;font-weight:normal;">Joginder</div>
<div class="t" style="left:684.00px;top:347.90px;font-size:15px;line-height:15px;letter-spacing:-0.910px;color:#252423;font-weight:normal;">456</div>
<div class="t" style="left:502.20px;top:371.70px;font-size:15px;line-height:15px;letter-spacing:-0.577px;color:#252423;font-weight:normal;">Akshay</div>
<div class="t" style="left:684.00px;top:371.70px;font-size:15px;line-height:15px;letter-spacing:-0.910px;color:#252423;font-weight:normal;">452</div>
<div class="t" style="left:502.20px;top:395.10px;font-size:15px;line-height:15px;letter-spacing:-0.177px;color:#111;font-weight:bold;">Total</div>
<div class="t" style="left:674.00px;top:395.10px;font-size:15px;line-height:15px;letter-spacing:-0.058px;color:#111;font-weight:bold;">2295</div>
<div style="left:909px;top:233px;width:418px;height:320px;background:#e6e6e6;border:2px solid #666;border-radius:12px;box-sizing:border-box"></div>
<svg style="left:922px;top:234px" width="142" height="34" viewBox="0 0 142 34"><path d="M2 7 C50 6 100 3 139 1.3 L139 26.6 C100 29 50 32 2 32.8 Z" fill="#ebe600"/></svg>
<svg style="left:905px;top:269px" width="76" height="33" viewBox="0 0 76 33"><path d="M1 1 C30 2 60 0 73 1 L74 29 C50 30 30 31 9 30 L9 28 L1 28 Z" fill="#ebe600"/></svg>
<div style="left:979px;top:271px;width:33px;height:28px;border:1px solid #dcdcdc;border-left:none;box-sizing:border-box"></div>
<div class="t" style="left:930.30px;top:246.65px;font-size:16px;line-height:16px;letter-spacing:0.085px;color:#252423;font-weight:normal;">Marks Parameter</div>
<div class="t" style="left:937.50px;top:279.77px;font-size:13.5px;line-height:13.5px;letter-spacing:-0.259px;color:#252423;font-weight:normal;">440</div>
<div style="left:945px;top:321px;width:352px;height:3px;background:#f4f4f4;border-radius:2px"></div>
<svg style="left:1239px;top:308px;" width="31" height="31" viewBox="0 0 31 31"><circle cx="15.5" cy="15.5" r="13.5" fill="#fff" stroke="#555" stroke-width="2"/></svg>
<svg style="left:901px;top:225px;" width="16" height="16" viewBox="0 0 16 16"><circle cx="8" cy="8" r="6.8" fill="#fff" stroke="#666" stroke-width="1.2"/></svg>
<svg style="left:1109px;top:225px;" width="16" height="16" viewBox="0 0 16 16"><circle cx="8" cy="8" r="6.8" fill="#fff" stroke="#666" stroke-width="1.2"/></svg>
<svg style="left:1317px;top:225px;" width="16" height="16" viewBox="0 0 16 16"><circle cx="8" cy="8" r="6.8" fill="#fff" stroke="#666" stroke-width="1.2"/></svg>
<svg style="left:901px;top:385px;" width="16" height="16" viewBox="0 0 16 16"><circle cx="8" cy="8" r="6.8" fill="#fff" stroke="#666" stroke-width="1.2"/></svg>
<svg style="left:1317px;top:385px;" width="16" height="16" viewBox="0 0 16 16"><circle cx="8" cy="8" r="6.8" fill="#fff" stroke="#666" stroke-width="1.2"/></svg>
<svg style="left:901px;top:545px;" width="16" height="16" viewBox="0 0 16 16"><circle cx="8" cy="8" r="6.8" fill="#fff" stroke="#666" stroke-width="1.2"/></svg>
<svg style="left:1109px;top:545px;" width="16" height="16" viewBox="0 0 16 16"><circle cx="8" cy="8" r="6.8" fill="#fff" stroke="#666" stroke-width="1.2"/></svg>
<svg style="left:1317px;top:545px;" width="16" height="16" viewBox="0 0 16 16"><circle cx="8" cy="8" r="6.8" fill="#fff" stroke="#666" stroke-width="1.2"/></svg>
<svg style="left:1229px;top:209px;" width="23" height="20" viewBox="0 0 23 20"><path d="M2.2 2.2H20.8L13.6 10V18.2H9.4V10Z" fill="none" stroke="#666" stroke-width="1.6" stroke-linejoin="miter"/></svg>
<svg style="left:1265px;top:211px;" width="21" height="18" viewBox="0 0 21 18"><path d="M9.5 1.5H1.5V16.2H18.6V10.5M1.5 11H9.5V16.2M11.5 8.5L18 2M12.5 1.5H18.6V7.5" fill="none" stroke="#666" stroke-width="1.6"/></svg>
<div style="left:1300.5px;top:216.2px;width:3px;height:3px;background:#555;border-radius:50%"></div>
<div style="left:1308px;top:216.2px;width:3px;height:3px;background:#555;border-radius:50%"></div>
<div style="left:1315.5px;top:216.2px;width:3px;height:3px;background:#555;border-radius:50%"></div>
<div style="left:865px;top:233px;width:34px;height:35px;background:#e5e5e5;border-radius:4px;box-shadow:0 1px 3px rgba(0,0,0,0.22)"></div>
<div style="left:865px;top:283px;width:34px;height:35px;background:#e5e5e5;border-radius:4px;box-shadow:0 1px 3px rgba(0,0,0,0.22)"></div>
<svg style="left:865px;top:236px;" width="30" height="30" viewBox="0 0 30 30"><path d="M7 25.5V11h6.5v14.5M13.5 25.5V3.5h6v22M19.5 25.5V8.5h6.5v17z" fill="#fff" stroke="#333" stroke-width="1.8" stroke-linejoin="round"/><path d="M6 25.5h20.5" stroke="#333" stroke-width="1.8"/>
<path d="M8.5 2H15L11.5 8H15L5 17L8 10H4.5Z" fill="#f7b32b" stroke="#e06c00" stroke-width="1" stroke-linejoin="round"/></svg>
<svg style="left:865px;top:286px;" width="30" height="30" viewBox="0 0 30 30"><path d="M26.5 5L16 17.5" stroke="#333" stroke-width="3.4" stroke-linecap="round"/><path d="M26.5 5L16 17.5" stroke="#fff" stroke-width="1.4" stroke-linecap="round"/>
<path d="M16 17c-2.2-1.6-5.5-1-7 1.2-1.2 1.6-2 3-4.5 3 3.4 1.6 8.5 1.2 10.6-.8 1.2-1.2 1.3-2.4.9-3.4z" fill="#8ec2ee" stroke="#1f77c9" stroke-width="1.2" stroke-linejoin="round"/>
<path d="M22.5 15.5v11M17 21h11" stroke="#2f9a4a" stroke-width="2"/></svg>
<svg style="left:1399px;top:169px;" width="17" height="16" viewBox="0 0 17 16"><path d="M8 1.5L2 8l6 6.5M15 1.5L9 8l6 6.5" fill="none" stroke="#333" stroke-width="1.4"/></svg>
<svg style="left:1402px;top:203px;" width="17" height="18" viewBox="0 0 17 18"><path d="M14 1.5V16.5L6 10.5H1.5V7.5H6Z" fill="none" stroke="#333" stroke-width="1.5" stroke-linejoin="round"/></svg>
<div class="t" style="left:1419.33px;top:231.00px;font-size:20px;line-height:20px;-webkit-text-stroke:0.5px #252423;color:#252423;transform:rotate(90deg);transform-origin:0 0;letter-spacing:-0.482px">Filters</div>
<div class="t" style="left:1439.22px;top:168.24px;font-size:20.5px;line-height:20.5px;letter-spacing:-0.353px;color:#383736;font-weight:normal;-webkit-text-stroke:0.45px #383736;">Format</div>
<div style="left:1600px;top:177px;width:3px;height:3px;background:#333;border-radius:50%"></div>
<div style="left:1607px;top:177px;width:3px;height:3px;background:#333;border-radius:50%"></div>
<div style="left:1614px;top:177px;width:3px;height:3px;background:#333;border-radius:50%"></div>
<svg style="left:1627px;top:169px;" width="17" height="16" viewBox="0 0 17 16"><path d="M2 1.5L8 8l-6 6.5M9 1.5L15 8l-6 6.5" fill="none" stroke="#333" stroke-width="1.4"/></svg>
<div style="left:1438px;top:205px;width:205px;height:33px;background:#f9f9f9;border:1px solid #8a8886;border-radius:3px;box-sizing:border-box"></div>
<svg style="left:1447px;top:211px;" width="21" height="21" viewBox="0 0 21 21"><circle cx="12.5" cy="8" r="6.3" fill="none" stroke="#555" stroke-width="1.4"/><path d="M8 12.5L1.5 19" stroke="#555" stroke-width="1.5"/></svg>
<div class="t" style="left:1474.70px;top:214.61px;font-size:17px;line-height:17px;letter-spacing:-0.791px;color:#605e5c;font-weight:normal;">Search</div>
<div class="t" style="left:1443.72px;top:261.61px;font-size:17px;line-height:17px;letter-spacing:-0.108px;color:#383736;font-weight:normal;-webkit-text-stroke:0.45px #383736;">Visual</div>
<div style="left:1443px;top:285px;width:47px;height:3px;background:#117865;border-radius:1px"></div>
<div class="t" style="left:1510.80px;top:261.61px;font-size:17px;line-height:17px;letter-spacing:0.002px;color:#383736;font-weight:normal;">Properties</div>
<div style="left:1614px;top:269px;width:3px;height:3px;background:#333;border-radius:50%"></div>
<div style="left:1621px;top:269px;width:3px;height:3px;background:#333;border-radius:50%"></div>
<div style="left:1628px;top:269px;width:3px;height:3px;background:#333;border-radius:50%"></div>
<div style="left:1427px;top:306px;width:227px;height:9px;background:linear-gradient(rgba(0,0,0,0.09),rgba(0,0,0,0))"></div>
<div style="left:1438px;top:316px;width:205px;height:50px;background:#f3f2f1;border-radius:6px;box-shadow:0 1px 3px rgba(0,0,0,0.14)"></div>
<svg style="left:1449px;top:332px;" width="13" height="18" viewBox="0 0 13 18"><path d="M2 1.5L9.5 9L2 16.5" fill="none" stroke="#333" stroke-width="1.5"/></svg>
<div class="t" style="left:1468.82px;top:334.38px;font-size:15.5px;line-height:15.5px;letter-spacing:-0.487px;color:#383736;font-weight:normal;-webkit-text-stroke:0.45px #383736;">Padding</div>
<div style="left:1438px;top:376px;width:205px;height:194px;background:#f3f2f1;border-radius:6px;box-shadow:0 1px 3px rgba(0,0,0,0.14)"></div>
<svg style="left:1447px;top:396px;" width="17" height="11" viewBox="0 0 17 11"><path d="M1.5 1.5L8.5 8.5L15.5 1.5" fill="none" stroke="#333" stroke-width="1.5"/></svg>
<div class="t" style="left:1468.82px;top:393.88px;font-size:15.5px;line-height:15.5px;letter-spacing:-0.307px;color:#383736;font-weight:normal;-webkit-text-stroke:0.45px #383736;">Background</div>
<div style="left:1593px;top:391px;width:40px;height:20px;background:#117865;border-radius:10px"></div>
<div class="t" style="left:1599.22px;top:396.26px;font-size:11.5px;line-height:11.5px;letter-spacing:-1.500px;color:#fff;font-weight:normal;-webkit-text-stroke:0.45px #fff;">On</div>
<div style="left:1617px;top:396px;width:10px;height:10px;background:#fff;border-radius:50%"></div>
<div class="t" style="left:1448.00px;top:429.30px;font-size:15px;line-height:15px;letter-spacing:0.037px;color:#383736;font-weight:normal;">Color</div>
<div style="left:1448px;top:451px;width:65px;height:30px;background:#fff;border:1px solid #8a8886;border-radius:2px;box-sizing:border-box"></div>
<div style="left:1454px;top:456px;width:20px;height:20px;background:#e6e6e6;border:1px solid #8a8886;box-sizing:border-box"></div>
<svg style="left:1491px;top:461px;" width="16" height="10" viewBox="0 0 16 10"><path d="M1.5 1.5L8 8L14.5 1.5" fill="none" stroke="#333" stroke-width="1.4"/></svg>
<div style="left:1518px;top:451px;width:30px;height:30px;background:#fff;border:1px solid #8a8886;border-radius:2px;box-sizing:border-box"></div>
<div class="t" style="left:1522px;top:454px;font-family:'Liberation Serif',serif;font-style:italic;font-size:21px;line-height:22px;color:#333">fx</div>
<div class="t" style="left:1448.00px;top:494.70px;font-size:15px;line-height:15px;letter-spacing:-0.469px;color:#383736;font-weight:normal;">Transparency</div>
<div style="left:1448px;top:524px;width:68px;height:29px;background:#fff;border:1px solid #8a8886;border-radius:2px;box-sizing:border-box"></div>
<div class="t" style="left:1454.00px;top:531.30px;font-size:15px;line-height:15px;letter-spacing:0.000px;color:#605e5c;font-weight:normal;">0 %</div>
<svg style="left:1501px;top:528px;" width="12" height="21" viewBox="0 0 12 21"><path d="M1.5 6.5L6 2l4.5 4.5M1.5 14.5L6 19l4.5-4.5" fill="none" stroke="#555" stroke-width="1.1"/></svg>
<div style="left:1530px;top:537px;width:96px;height:5px;background:#c8c6c4;border-radius:3px"></div>
<svg style="left:1521px;top:530px;" width="18" height="18" viewBox="0 0 18 18"><circle cx="9" cy="9" r="7.8" fill="#fff" stroke="#444" stroke-width="1.6"/></svg>
<div style="left:1438px;top:581px;width:205px;height:260px;background:#f3f2f1;border-radius:6px;box-shadow:0 1px 3px rgba(0,0,0,0.14)"></div>
<svg style="left:1447px;top:601px;" width="17" height="11" viewBox="0 0 17 11"><path d="M1.5 1.5L8.5 8.5L15.5 1.5" fill="none" stroke="#333" stroke-width="1.5"/></svg>
<div class="t" style="left:1468.82px;top:599.18px;font-size:15.5px;line-height:15.5px;letter-spacing:-0.124px;color:#383736;font-weight:normal;-webkit-text-stroke:0.45px #383736;">Visual border</div>
<div style="left:1593px;top:596px;width:40px;height:20px;background:#117865;border-radius:10px"></div>
<div class="t" style="left:1599.22px;top:601.26px;font-size:11.5px;line-height:11.5px;letter-spacing:-1.500px;color:#fff;font-weight:normal;-webkit-text-stroke:0.45px #fff;">On</div>
<div style="left:1617px;top:601px;width:10px;height:10px;background:#fff;border-radius:50%"></div>
<div class="t" style="left:1448.00px;top:634.60px;font-size:15px;line-height:15px;letter-spacing:0.037px;color:#383736;font-weight:normal;">Color</div>
<div style="left:1448px;top:656px;width:65px;height:30px;background:#fff;border:1px solid #8a8886;border-radius:2px;box-sizing:border-box"></div>
<div style="left:1454px;top:661px;width:20px;height:20px;background:#000000;border:1px solid #8a8886;box-sizing:border-box"></div>
<svg style="left:1491px;top:666px;" width="16" height="10" viewBox="0 0 16 10"><path d="M1.5 1.5L8 8L14.5 1.5" fill="none" stroke="#333" stroke-width="1.4"/></svg>
<div style="left:1518px;top:656px;width:30px;height:30px;background:#fff;border:1px solid #8a8886;border-radius:2px;box-sizing:border-box"></div>
<div class="t" style="left:1522px;top:659px;font-family:'Liberation Serif',serif;font-style:italic;font-size:21px;line-height:22px;color:#333">fx</div>
<div class="t" style="left:1448.00px;top:699.30px;font-size:15px;line-height:15px;letter-spacing:-0.183px;color:#383736;font-weight:normal;">Rounded corners</div>
<div style="left:1448px;top:728px;width:68px;height:29px;background:#fff;border:1px solid #8a8886;border-radius:2px;box-sizing:border-box"></div>
<div class="t" style="left:1454.00px;top:735.30px;font-size:15px;line-height:15px;letter-spacing:0.000px;color:#605e5c;font-weight:normal;">12 px</div>
<svg style="left:1501px;top:732px;" width="12" height="21" viewBox="0 0 12 21"><path d="M1.5 6.5L6 2l4.5 4.5M1.5 14.5L6 19l4.5-4.5" fill="none" stroke="#555" stroke-width="1.1"/></svg>
<div style="left:1531px;top:742px;width:95px;height:5px;background:#c8c6c4;border-radius:3px"></div>
<div style="left:1531px;top:742px;width:36px;height:5px;background:#444;border-radius:3px"></div>
<svg style="left:1559px;top:736px;" width="18" height="18" viewBox="0 0 18 18"><circle cx="9" cy="9" r="7.8" fill="#fff" stroke="#444" stroke-width="1.6"/></svg>
<div class="t" style="left:1448.00px;top:779.00px;font-size:15px;line-height:15px;letter-spacing:0.165px;color:#383736;font-weight:normal;">Width</div>
<div style="left:1448px;top:801px;width:88px;height:29px;background:#fff;border:1px solid #8a8886;border-radius:2px;box-sizing:border-box"></div>
<div class="t" style="left:1454.00px;top:808.30px;font-size:15px;line-height:15px;letter-spacing:0.000px;color:#605e5c;font-weight:normal;">1 px</div>
<svg style="left:1521px;top:805px;" width="12" height="21" viewBox="0 0 12 21"><path d="M1.5 6.5L6 2l4.5 4.5M1.5 14.5L6 19l4.5-4.5" fill="none" stroke="#555" stroke-width="1.1"/></svg>
<div style="left:1438px;top:851px;width:205px;height:40px;background:#f3f2f1;border-radius:6px;box-shadow:0 1px 3px rgba(0,0,0,0.14)"></div>
<svg style="left:1449px;top:866px;" width="13" height="18" viewBox="0 0 13 18"><path d="M2 1.5L9.5 9L2 16.5" fill="none" stroke="#333" stroke-width="1.5"/></svg>
<div class="t" style="left:1468.82px;top:868.28px;font-size:15.5px;line-height:15.5px;letter-spacing:-0.621px;color:#383736;font-weight:normal;-webkit-text-stroke:0.45px #383736;">Shadow</div>
<div style="left:1593px;top:866px;width:40px;height:20px;background:#fff;border:1px solid #555;border-radius:10px;box-sizing:border-box"></div>
<div style="left:1598px;top:870px;width:12px;height:12px;background:#444;border-radius:50%"></div>
<div class="t" style="left:1612.00px;top:871.19px;font-size:11px;line-height:11px;letter-spacing:0.751px;color:#333;font-weight:normal;">Off</div>
<div style="left:1646px;top:500px;width:7px;height:301px;background:#8a8886;border-radius:4px"></div>
<div class="t" style="left:1664.92px;top:168.24px;font-size:20.5px;line-height:20.5px;letter-spacing:-0.919px;color:#383736;font-weight:normal;-webkit-text-stroke:0.45px #383736;">Data</div>
<div style="left:1825px;top:177px;width:3px;height:3px;background:#333;border-radius:50%"></div>
<div style="left:1832px;top:177px;width:3px;height:3px;background:#333;border-radius:50%"></div>
<div style="left:1839px;top:177px;width:3px;height:3px;background:#333;border-radius:50%"></div>
<svg style="left:1853px;top:169px;" width="17" height="16" viewBox="0 0 17 16"><path d="M2 1.5L8 8l-6 6.5M9 1.5L15 8l-6 6.5" fill="none" stroke="#333" stroke-width="1.4"/></svg>
<div style="left:1660px;top:211px;width:214px;height:29px;background:#fff;border:1px solid #d1d1d1;border-bottom-color:#616161;border-radius:4px;box-sizing:border-box"></div>
<svg style="left:1673px;top:217px;" width="20" height="19" viewBox="0 0 20 19"><circle cx="8" cy="8" r="6.3" fill="none" stroke="#444" stroke-width="1.5"/><path d="M12.5 12.5L18 18" stroke="#444" stroke-width="1.6"/></svg>
<div class="t" style="left:1701.50px;top:218.31px;font-size:17px;line-height:17px;letter-spacing:-0.671px;color:#707070;font-weight:normal;">Search</div>
<svg style="left:1673px;top:260.8px;" width="10" height="16" viewBox="0 0 10 16"><path d="M1.5 1.5L8 8l-6.5 6.5" fill="none" stroke="#444" stroke-width="1.3"/></svg>
<svg style="left:1689px;top:260.8px;" width="17" height="17" viewBox="0 0 17 17"><rect x="1" y="1" width="15" height="15" rx="3" fill="none" stroke="#333" stroke-width="1.5"/><path d="M5.8 1v15M11.2 1v15M1 5.8h15M1 11.2h15" stroke="#333" stroke-width="1.3"/></svg>
<div class="t" style="left:1713.40px;top:262.02px;font-size:14.5px;line-height:14.5px;letter-spacing:-0.168px;color:#383736;font-weight:normal;">Query77</div>
<svg style="left:1673px;top:290.5px;" width="10" height="16" viewBox="0 0 10 16"><path d="M1.5 1.5L8 8l-6.5 6.5" fill="none" stroke="#444" stroke-width="1.3"/></svg>
<svg style="left:1689px;top:290.5px;" width="17" height="17" viewBox="0 0 17 17"><rect x="1" y="1" width="15" height="15" rx="3" fill="none" stroke="#333" stroke-width="1.5"/><path d="M5.8 1v15M11.2 1v15M1 5.8h15M1 11.2h15" stroke="#333" stroke-width="1.3"/></svg>
<div class="t" style="left:1713.40px;top:291.72px;font-size:14.5px;line-height:14.5px;letter-spacing:-0.129px;color:#383736;font-weight:normal;">Query8</div>
<svg style="left:1673px;top:320.6px;" width="10" height="16" viewBox="0 0 10 16"><path d="M1.5 1.5L8 8l-6.5 6.5" fill="none" stroke="#444" stroke-width="1.3"/></svg>
<svg style="left:1689px;top:320.6px;" width="17" height="17" viewBox="0 0 17 17"><rect x="1" y="1" width="15" height="15" rx="3" fill="none" stroke="#333" stroke-width="1.5"/><path d="M5.8 1v15M11.2 1v15M1 5.8h15M1 11.2h15" stroke="#333" stroke-width="1.3"/></svg>
<div class="t" style="left:1713.40px;top:321.82px;font-size:14.5px;line-height:14.5px;letter-spacing:-0.129px;color:#383736;font-weight:normal;">Query9</div>
<svg style="left:1673px;top:350.6px;" width="10" height="16" viewBox="0 0 10 16"><path d="M1.5 1.5L8 8l-6.5 6.5" fill="none" stroke="#444" stroke-width="1.3"/></svg>
<svg style="left:1689px;top:350.6px;" width="17" height="17" viewBox="0 0 17 17"><rect x="1" y="1" width="15" height="15" rx="3" fill="none" stroke="#333" stroke-width="1.5"/><path d="M5.8 1v15M11.2 1v15M1 5.8h15M1 11.2h15" stroke="#333" stroke-width="1.3"/></svg>
<div class="t" style="left:1713.40px;top:351.82px;font-size:14.5px;line-height:14.5px;letter-spacing:0.139px;color:#383736;font-weight:normal;">sample-data</div>
<svg style="left:1669px;top:384px;" width="17" height="11" viewBox="0 0 17 11"><path d="M1.5 1.5L8.5 8.5L15.5 1.5" fill="none" stroke="#444" stroke-width="1.3"/></svg>
<svg style="left:1689px;top:380.6px;" width="17" height="17" viewBox="0 0 17 17"><rect x="1" y="1" width="15" height="15" rx="3" fill="none" stroke="#333" stroke-width="1.5"/><path d="M5.8 1v15M11.2 1v15M1 5.8h15M1 11.2h15" stroke="#333" stroke-width="1.3"/></svg>
<div class="t" style="left:1713.40px;top:381.32px;font-size:14.5px;line-height:14.5px;letter-spacing:-0.430px;color:#383736;font-weight:normal;">Sheet1</div>
<div style="left:1709px;top:411px;width:15px;height:15px;border:1px solid #707070;border-radius:3px;box-sizing:border-box"></div>
<svg style="left:1734px;top:410px;" width="17" height="17" viewBox="0 0 17 17"><rect x="1" y="1" width="15" height="15" rx="3" fill="none" stroke="#333" stroke-width="1.5" stroke-dasharray="4 2.5"/><circle cx="8.5" cy="8.5" r="3.3" fill="none" stroke="#333" stroke-width="1.3"/><path d="M8.5 5.5v6M5.5 8.5h6" stroke="#333" stroke-width="1.1"/></svg>
<div class="t" style="left:1757.00px;top:412.12px;font-size:14.5px;line-height:14.5px;letter-spacing:0.066px;color:#383736;font-weight:normal;">10th Marks (bi...</div>
<div style="left:1709px;top:441px;width:15px;height:15px;border:1px solid #707070;border-radius:3px;box-sizing:border-box"></div>
<svg style="left:1734px;top:440px;" width="16" height="18" viewBox="0 0 16 18"><rect x="1" y="1" width="14" height="16" rx="3" fill="none" stroke="#333" stroke-width="1.5"/><rect x="4" y="4" width="8" height="3" fill="none" stroke="#333" stroke-width="1.1"/><g fill="#333"><rect x="3.8" y="9" width="2" height="2"/><rect x="7" y="9" width="2" height="2"/><rect x="10.2" y="9" width="2" height="2"/><rect x="3.8" y="12.5" width="2" height="2"/><rect x="7" y="12.5" width="2" height="2"/><rect x="10.2" y="12.5" width="2" height="2"/></g></svg>
<div class="t" style="left:1757.00px;top:442.12px;font-size:14.5px;line-height:14.5px;letter-spacing:0.134px;color:#383736;font-weight:normal;">10th Marks M...</div>
<div style="left:1709px;top:471px;width:15px;height:15px;border:1px solid #707070;border-radius:3px;box-sizing:border-box"></div>
<svg style="left:1734px;top:470px;" width="16" height="18" viewBox="0 0 16 18"><rect x="1" y="1" width="14" height="16" rx="3" fill="none" stroke="#333" stroke-width="1.5"/><rect x="4" y="4" width="8" height="3" fill="none" stroke="#333" stroke-width="1.1"/><g fill="#333"><rect x="3.8" y="9" width="2" height="2"/><rect x="7" y="9" width="2" height="2"/><rect x="10.2" y="9" width="2" height="2"/><rect x="3.8" y="12.5" width="2" height="2"/><rect x="7" y="12.5" width="2" height="2"/><rect x="10.2" y="12.5" width="2" height="2"/></g></svg>
<div class="t" style="left:1757.00px;top:472.12px;font-size:14.5px;line-height:14.5px;letter-spacing:0.134px;color:#383736;font-weight:normal;">12th Marks M...</div>
<svg style="left:1692px;top:500.6px;" width="10" height="16" viewBox="0 0 10 16"><path d="M1.5 1.5L8 8l-6.5 6.5" fill="none" stroke="#444" stroke-width="1.3"/></svg>
<div style="left:1709px;top:501px;width:15px;height:15px;border:1px solid #707070;border-radius:3px;box-sizing:border-box"></div>
<svg style="left:1734px;top:500px;" width="17" height="17" viewBox="0 0 17 17"><rect x="1" y="1" width="15" height="15" rx="3" fill="none" stroke="#333" stroke-width="1.5"/><path d="M1 5.5h15" stroke="#333" stroke-width="1.4"/><g fill="#333"><rect x="4" y="8" width="2" height="2"/><rect x="7.5" y="8" width="2" height="2"/><rect x="11" y="8" width="2" height="2"/><rect x="4" y="11.5" width="2" height="2"/><rect x="7.5" y="11.5" width="2" height="2"/></g></svg>
<div class="t" style="left:1757.00px;top:502.12px;font-size:14.5px;line-height:14.5px;letter-spacing:0.196px;color:#383736;font-weight:normal;">Birthdate</div>
<div style="left:1709px;top:531px;width:15px;height:15px;border:1px solid #707070;border-radius:3px;box-sizing:border-box"></div>
<svg style="left:1734px;top:530px;" width="16" height="17" viewBox="0 0 16 17"><path d="M14 1.5H2L8.5 8.5L2 15.5h12.5" fill="none" stroke="#333" stroke-width="1.5"/></svg>
<div class="t" style="left:1757.00px;top:532.12px;font-size:14.5px;line-height:14.5px;letter-spacing:0.300px;color:#383736;font-weight:normal;">Birthtime</div>
<div style="left:1709px;top:561px;width:15px;height:15px;border:1px solid #707070;border-radius:3px;box-sizing:border-box"></div>
<svg style="left:1734px;top:560px;" width="16" height="18" viewBox="0 0 16 18"><rect x="1" y="1" width="14" height="16" rx="3" fill="none" stroke="#333" stroke-width="1.5"/><rect x="4" y="4" width="8" height="3" fill="none" stroke="#333" stroke-width="1.1"/><g fill="#333"><rect x="3.8" y="9" width="2" height="2"/><rect x="7" y="9" width="2" height="2"/><rect x="10.2" y="9" width="2" height="2"/><rect x="3.8" y="12.5" width="2" height="2"/><rect x="7" y="12.5" width="2" height="2"/><rect x="10.2" y="12.5" width="2" height="2"/></g></svg>
<div class="t" style="left:1757.00px;top:562.12px;font-size:14.5px;line-height:14.5px;letter-spacing:-0.051px;color:#383736;font-weight:normal;">Blank Measure</div>
<div style="left:1709px;top:591px;width:15px;height:15px;border:1px solid #707070;border-radius:3px;box-sizing:border-box"></div>
<svg style="left:1734px;top:590px;" width="16" height="18" viewBox="0 0 16 18"><rect x="1" y="1" width="14" height="16" rx="3" fill="none" stroke="#333" stroke-width="1.5"/><rect x="4" y="4" width="8" height="3" fill="none" stroke="#333" stroke-width="1.1"/><g fill="#333"><rect x="3.8" y="9" width="2" height="2"/><rect x="7" y="9" width="2" height="2"/><rect x="10.2" y="9" width="2" height="2"/><rect x="3.8" y="12.5" width="2" height="2"/><rect x="7" y="12.5" width="2" height="2"/><rect x="10.2" y="12.5" width="2" height="2"/></g></svg>
<div class="t" style="left:1757.00px;top:592.12px;font-size:14.5px;line-height:14.5px;letter-spacing:-0.159px;color:#383736;font-weight:normal;">Blank values i...</div>
<div style="left:1709px;top:621px;width:15px;height:15px;border:1px solid #707070;border-radius:3px;box-sizing:border-box"></div>
<svg style="left:1734px;top:620px;" width="18" height="18" viewBox="0 0 18 18"><path d="M7 16H3a2 2 0 0 1-2-2V3a2 2 0 0 1 2-2h8a2 2 0 0 1 2 2v2" fill="none" stroke="#333" stroke-width="1.4"/><path d="M5 1v15" stroke="#333" stroke-width="1.2"/><text x="7" y="14" font-family="Liberation Serif" font-style="italic" font-size="12" fill="#333">f</text><path d="M12 12l5 5M17 12l-5 5" stroke="#333" stroke-width="1.5"/></svg>
<div class="t" style="left:1757.00px;top:622.12px;font-size:14.5px;line-height:14.5px;letter-spacing:-0.251px;color:#383736;font-weight:normal;">check</div>
<div style="left:1709px;top:651px;width:15px;height:15px;border:1px solid #707070;border-radius:3px;box-sizing:border-box"></div>
<svg style="left:1734px;top:650px;" width="19" height="18" viewBox="0 0 19 18"><path d="M8 16H3a2 2 0 0 1-2-2V3a2 2 0 0 1 2-2h8a2 2 0 0 1 2 2v3" fill="none" stroke="#333" stroke-width="1.4"/><path d="M5 1v15M1 6h12" stroke="#333" stroke-width="1.1"/><path d="M18 8H10l4 4-4 5h8" fill="none" stroke="#333" stroke-width="1.5"/></svg>
<div class="t" style="left:1757.00px;top:652.12px;font-size:14.5px;line-height:14.5px;letter-spacing:0.120px;color:#383736;font-weight:normal;">Count numbe...</div>
<div style="left:1709px;top:681px;width:15px;height:15px;border:1px solid #707070;border-radius:3px;box-sizing:border-box"></div>
<div class="t" style="left:1757.00px;top:682.12px;font-size:14.5px;line-height:14.5px;letter-spacing:0.139px;color:#383736;font-weight:normal;">Country</div>
<div style="left:1709px;top:711px;width:15px;height:15px;border:1px solid #707070;border-radius:3px;box-sizing:border-box"></div>
<svg style="left:1734px;top:710px;" width="17" height="17" viewBox="0 0 17 17"><rect x="1" y="1" width="15" height="15" rx="3" fill="none" stroke="#333" stroke-width="1.5" stroke-dasharray="4 2.5"/><circle cx="8.5" cy="8.5" r="3.3" fill="none" stroke="#333" stroke-width="1.3"/><path d="M8.5 5.5v6M5.5 8.5h6" stroke="#333" stroke-width="1.1"/></svg>
<div class="t" style="left:1757.00px;top:712.12px;font-size:14.5px;line-height:14.5px;letter-spacing:0.119px;color:#383736;font-weight:normal;">Country Groups</div>
<div style="left:1709px;top:741px;width:15px;height:15px;border:1px solid #707070;border-radius:3px;box-sizing:border-box"></div>
<svg style="left:1734px;top:740px;" width="16" height="18" viewBox="0 0 16 18"><rect x="1" y="1" width="14" height="16" rx="3" fill="none" stroke="#333" stroke-width="1.5"/><rect x="4" y="4" width="8" height="3" fill="none" stroke="#333" stroke-width="1.1"/><g fill="#333"><rect x="3.8" y="9" width="2" height="2"/><rect x="7" y="9" width="2" height="2"/><rect x="10.2" y="9" width="2" height="2"/><rect x="3.8" y="12.5" width="2" height="2"/><rect x="7" y="12.5" width="2" height="2"/><rect x="10.2" y="12.5" width="2" height="2"/></g></svg>
<div class="t" style="left:1757.00px;top:742.12px;font-size:14.5px;line-height:14.5px;letter-spacing:-0.077px;color:#383736;font-weight:normal;">Country Speci...</div>
<svg style="left:1692px;top:770.6px;" width="10" height="16" viewBox="0 0 10 16"><path d="M1.5 1.5L8 8l-6.5 6.5" fill="none" stroke="#444" stroke-width="1.3"/></svg>
<div style="left:1709px;top:771px;width:15px;height:15px;border:1px solid #707070;border-radius:3px;box-sizing:border-box"></div>
<svg style="left:1734px;top:770px;" width="17" height="17" viewBox="0 0 17 17"><rect x="1" y="1" width="15" height="15" rx="3" fill="none" stroke="#333" stroke-width="1.5"/><path d="M1 5.5h15" stroke="#333" stroke-width="1.4"/><g fill="#333"><rect x="4" y="8" width="2" height="2"/><rect x="7.5" y="8" width="2" height="2"/><rect x="11" y="8" width="2" height="2"/><rect x="4" y="11.5" width="2" height="2"/><rect x="7.5" y="11.5" width="2" height="2"/></g></svg>
<div class="t" style="left:1757.00px;top:772.12px;font-size:14.5px;line-height:14.5px;letter-spacing:-0.368px;color:#383736;font-weight:normal;">Dates</div>
<div style="left:1709px;top:801px;width:15px;height:15px;border:1px solid #707070;border-radius:3px;box-sizing:border-box"></div>
<svg style="left:1734px;top:800px;" width="16" height="18" viewBox="0 0 16 18"><rect x="1" y="1" width="14" height="16" rx="3" fill="none" stroke="#333" stroke-width="1.5"/><rect x="4" y="4" width="8" height="3" fill="none" stroke="#333" stroke-width="1.1"/><g fill="#333"><rect x="3.8" y="9" width="2" height="2"/><rect x="7" y="9" width="2" height="2"/><rect x="10.2" y="9" width="2" height="2"/><rect x="3.8" y="12.5" width="2" height="2"/><rect x="7" y="12.5" width="2" height="2"/><rect x="10.2" y="12.5" width="2" height="2"/></g></svg>
<div class="t" style="left:1757.00px;top:802.12px;font-size:14.5px;line-height:14.5px;letter-spacing:-0.449px;color:#383736;font-weight:normal;">FLOOR measure</div>
<div style="left:1709px;top:831px;width:15px;height:15px;border:1px solid #707070;border-radius:3px;box-sizing:border-box"></div>
<svg style="left:1734px;top:830px;" width="16" height="17" viewBox="0 0 16 17"><path d="M14 1.5H2L8.5 8.5L2 15.5h12.5" fill="none" stroke="#333" stroke-width="1.5"/></svg>
<div class="t" style="left:1757.00px;top:832.12px;font-size:14.5px;line-height:14.5px;letter-spacing:0.219px;color:#383736;font-weight:normal;">Graduation M...</div>
<div style="left:1709px;top:861px;width:15px;height:15px;border:1px solid #707070;border-radius:3px;box-sizing:border-box"></div>
<div class="t" style="left:1757.00px;top:862.12px;font-size:14.5px;line-height:14.5px;letter-spacing:-1.500px;color:#383736;font-weight:normal;">ID</div>
<div style="left:1864px;top:659px;width:9px;height:94px;background:#8a8886;border-radius:1px"></div>
<div style="left:1880px;top:153px;width:38px;height:40px;background:#e1e1e1;border:1px solid #8f8f8f;border-right:none;box-sizing:border-box"></div>
<svg style="left:1890px;top:161px;" width="21" height="24" viewBox="0 0 21 24"><path d="M1.5 4.5v15c0 1.8 4 3 9 3s9-1.2 9-3v-15" fill="#fff" stroke="#333" stroke-width="1.5"/><ellipse cx="10.5" cy="4.5" rx="9" ry="3" fill="#fff" stroke="#333" stroke-width="1.5"/></svg>
<svg style="left:1889px;top:201px;" width="26" height="26" viewBox="0 0 26 26"><path d="M1.7 23.3V11h6v12.3M7.7 23.3V1.7h5.6v10M13.3 5.5h6v5" fill="none" stroke="#444" stroke-width="1.5"/><path d="M1 23.3h11" stroke="#444" stroke-width="1.5"/><path d="M12.8 12.5v10c0 1.3 2.5 2.2 5.7 2.2s5.7-.9 5.7-2.2v-10" fill="#f9f9f9" stroke="#e07a1f" stroke-width="1.5"/><ellipse cx="18.5" cy="12.5" rx="5.7" ry="2.2" fill="#f9f9f9" stroke="#e07a1f" stroke-width="1.5"/></svg>
<div style="left:1880px;top:233px;width:38px;height:40px;background:#e1e1e1;border:1px solid #8f8f8f;border-right:none;box-sizing:border-box"></div>
<svg style="left:1889px;top:241px;" width="26" height="28" viewBox="0 0 26 28"><path d="M1.7 22V11h6v11M7.7 22V1.7h5.6v9M13.3 5.5h6v6" fill="none" stroke="#444" stroke-width="1.5"/><path d="M23.5 9.5L14 20" stroke="#333" stroke-width="3.2" stroke-linecap="round"/><path d="M23.5 9.5L14 20" stroke="#f0f0f0" stroke-width="1.2" stroke-linecap="round"/><path d="M13.5 19.5c-2-1.5-4.5-.5-5.5 1.5-.6 1.4-1.2 2.8-3.5 3.3 3 1.6 7.5 1.3 9.3-1 .8-1.2.8-2.6-.3-3.8z" fill="#4a9ee6" stroke="#1f77c9" stroke-width="1.1"/></svg>
<svg style="left:1889px;top:282px;" width="23" height="23" viewBox="0 0 23 23"><path d="M11.5 0.5v22M0.5 11.5h22" stroke="#222" stroke-width="1.9"/></svg>
</body></html>
